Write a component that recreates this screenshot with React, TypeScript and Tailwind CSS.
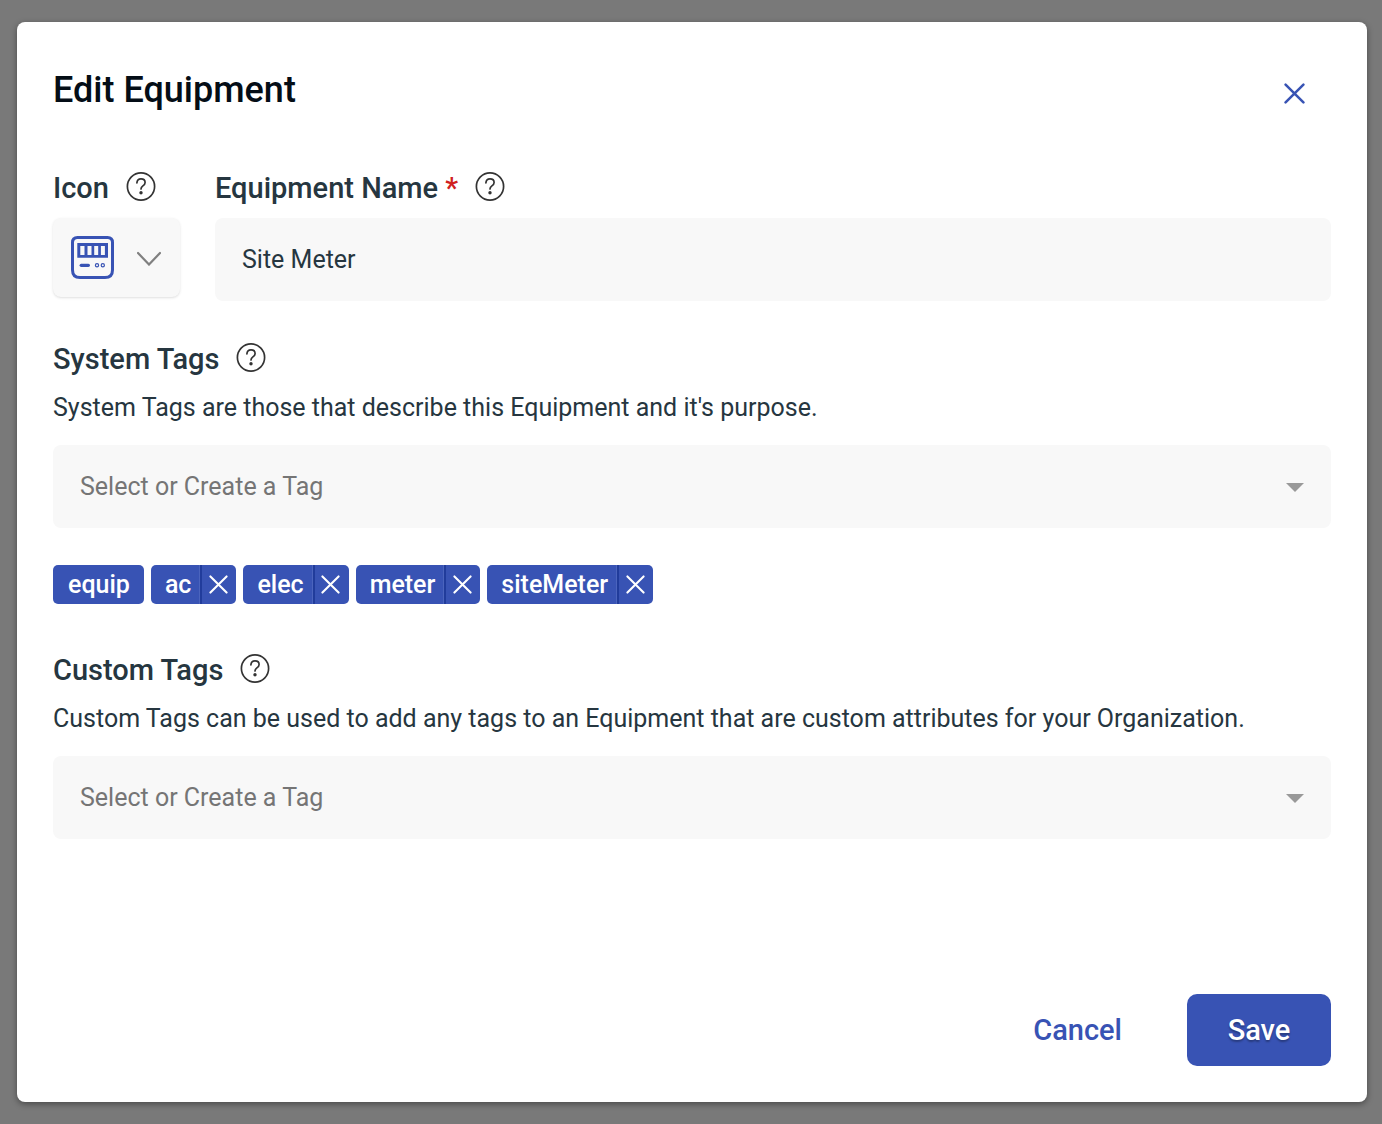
import React, { useState } from "react";

function Help({ label }: { label: string }) {
  return (
    <button type="button" aria-label={label} className="block h-[30px] w-[30px] shrink-0">
      <svg viewBox="0 0 30 30" width="30" height="30" fill="none" stroke="#333333" strokeWidth="1.7">
        <circle cx="15" cy="14.5" r="13.6" />
        <path d="M10.900 10.900C11.100 8.200 12.600 6.900 15 6.900c2.400 0 4.100 1.400 4.100 3.600 0 1.600-.9 2.500-2.200 3.400-1.300 1-1.900 1.700-1.900 3.100" strokeLinecap="round" />
        <circle cx="15" cy="20.800" r="1.700" fill="#333333" stroke="none" />
      </svg>
    </button>
  );
}

function Cross({ size, width }: { size: number; width: number }) {
  return (
    <svg viewBox="0 0 20 20" width={size} height={size} fill="none" stroke="currentColor" strokeWidth={width} strokeLinecap="round">
      <path d="M1.500 1.500 18.500 18.500M18.500 1.500 1.500 18.500" />
    </svg>
  );
}

function TagInput({ id }: { id: string }) {
  return (
    <div className="mt-[21px] flex h-[83px] items-center rounded-lg bg-[#f8f8f8] px-[27px]">
      <input id={id} placeholder="Select or Create a Tag" className="h-full min-w-0 flex-1 bg-transparent text-[25px] text-[#263238] outline-none placeholder:text-[#757575]" />
      <button type="button" aria-label="Show tags" className="pt-[2px]">
        <svg viewBox="0 0 18 9" width="18" height="9" fill="#999999" className="block"><path d="M0 0h18L9 9z" /></svg>
      </button>
    </div>
  );
}

export default function App() {
  const [tags, setTags] = useState(["ac", "elec", "meter", "siteMeter"]);
  const [name, setName] = useState("Site Meter");
  return (
    <div className="min-h-screen bg-[#797979] py-[22px] pr-[15px] pl-[17px] font-['Roboto',sans-serif] text-[#263640]">
      <form role="dialog" aria-labelledby="title" onSubmit={(e) => e.preventDefault()} className="flex min-h-[calc(100vh-44px)] flex-col rounded-lg bg-white p-9 shadow-[0_2px_6px_rgba(0,0,0,0.4)]">
        <header className="flex h-16 items-center justify-between pr-[26px]">
          <h1 id="title" className="text-[36px] font-medium text-[#040d16]">Edit Equipment</h1>
          <button type="button" aria-label="Close" className="pt-[7px] text-[#3853b4]"><Cross size={21} width={2.4} /></button>
        </header>

        <div className="mt-[50px] flex">
          <div className="w-[162px] shrink-0">
            <div className="flex h-[30px] items-center gap-[17px] text-[29px] leading-8 font-medium"><span id="icon-label" className="pt-px">Icon</span><Help label="About icon" /></div>
            <button type="button" aria-labelledby="icon-label" className="mt-4 flex h-[79px] w-[127px] items-center justify-between rounded-lg bg-[#f8f8f8] pr-[19px] pl-[18px] shadow">
              <svg viewBox="0 0 43 43" width="43" height="43" fill="none" stroke="#3853b4">
                <path d="M6.500 1.500h30q5 0 5 5v27.500q0 7.500-7.500 7.500h-25q-7.500 0-7.500-7.500v-27.500q0-5 5-5z" strokeWidth="3" />
                <path fill="#3853b4" stroke="none" fillRule="evenodd" d="M6.300 7H37v14.700H6.300zM9.300 10v9h4.200v-9zM16.500 10v9h4v-9zM23.200 10v9h4v-9zM29.900 10v9h4v-9z" />
                <path d="M10.200 29.300h7.200" strokeWidth="3.200" strokeLinecap="round" />
                <circle cx="26" cy="29.300" r="1.600" strokeWidth="1.200" /><circle cx="31.800" cy="29.300" r="1.600" strokeWidth="1.200" />
              </svg>
              <svg viewBox="0 0 24 16" width="24" height="16" fill="none" stroke="#808080" strokeWidth="2.200" strokeLinecap="round"><path d="m1 3 11 11.500L23 3" /></svg>
            </button>
          </div>
          <div className="min-w-0 flex-1">
            <div className="flex h-[30px] items-center gap-[17px] text-[29px] leading-8 font-medium">
              <label htmlFor="name" className="pt-px">Equipment Name <span className="text-[#d02020]">*</span></label><Help label="About equipment name" />
            </div>
            <input id="name" value={name} onChange={(e) => setName(e.target.value)} className="mt-4 h-[83px] w-full rounded-lg bg-[#f8f8f8] px-[27px] text-[25px] outline-none" />
          </div>
        </div>

        <section className="mt-[42px]">
          <div className="flex h-[30px] items-center gap-[17px] text-[29px] leading-8 font-medium"><label htmlFor="system" className="pt-px">System Tags</label><Help label="About system tags" /></div>
          <p className="mt-[19px] text-[25px] leading-8">System Tags are those that describe this Equipment and it's purpose.</p>
          <TagInput id="system" />
          <ul className="mt-[37px] flex flex-wrap gap-[7px] text-[25px] font-medium leading-[39px] text-white">
            <li className="rounded-[5px] bg-[#3853b4] pr-[14px] pl-[15px]">equip</li>
            {tags.map((t) => (
              <li key={t} className="flex rounded-[5px] bg-[#3853b4]">
                <span className="border-r border-[#4b64bd] pr-2 pl-[14px]">{t}</span>
                <button type="button" aria-label={"Remove " + t} onClick={() => setTags(tags.filter((x) => x !== t))} className="flex w-9 items-center justify-center border-l-2 border-[#213c9b] pr-[2px]"><Cross size={19} width={2.2} /></button>
              </li>
            ))}
          </ul>
        </section>

        <section className="mt-[50px]">
          <div className="flex h-[30px] items-center gap-[17px] text-[29px] leading-8 font-medium"><label htmlFor="custom" className="pt-px">Custom Tags</label><Help label="About custom tags" /></div>
          <p className="mt-[19px] text-[25px] leading-8">Custom Tags can be used to add any tags to an Equipment that are custom attributes for your Organization.</p>
          <TagInput id="custom" />
        </section>

        <footer className="mt-auto flex items-center justify-end gap-[65px] text-[29px] font-medium">
          <button type="button" className="pt-px text-[#3853b4]">Cancel</button>
          <button type="submit" className="h-[72px] w-36 rounded-[10px] bg-[#3853b4] pt-px text-white [text-shadow:0_2px_2px_rgba(0,0,0,0.3)]">Save</button>
        </footer>
      </form>
    </div>
  );
}
